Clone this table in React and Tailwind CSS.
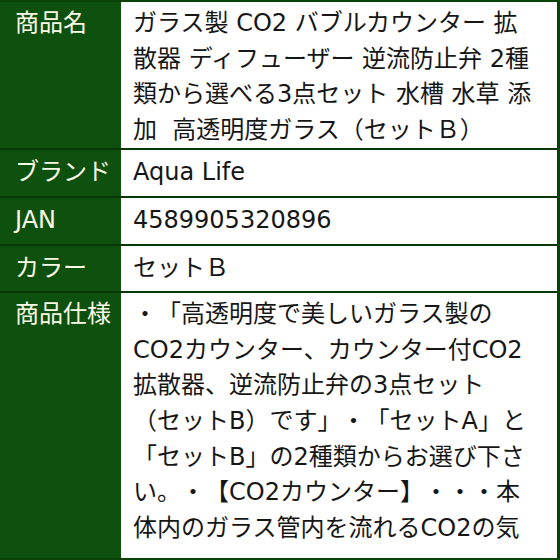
export default function App() {
  const font = { fontFamily: '"DejaVu Sans", "Noto Sans CJK JP", sans-serif' };
  const rows = [
    {
      label: '商品名',
      lines: [
        'ガラス製 CO2 バブルカウンター 拡',
        '散器 ディフューザー 逆流防止弁 2種',
        '類から選べる3点セット 水槽 水草 添',
        '加  高透明度ガラス（セットＢ）',
      ],
      cls: 'pt-[4px]',
    },
    { label: 'ブランド', lines: ['Aqua Life'], cls: 'py-[5px]' },
    { label: 'JAN', lines: ['4589905320896'], cls: 'py-[5px]' },
    { label: 'カラー', lines: ['セットＢ'], cls: 'py-[5px]' },
  ];
  const spec = [
    '・「高透明度で美しいガラス製の',
    'CO2カウンター、カウンター付CO2',
    '拡散器、逆流防止弁の3点セット',
    '（セットB）です」・「セットA」と',
    '「セットB」の2種類からお選び下さ',
    'い。・【CO2カウンター】・・・本',
    '体内のガラス管内を流れるCO2の気',
  ];
  return (
    <div
      className="w-[560px] h-[560px] overflow-hidden bg-[#0e500e] border-t-2 border-r-[3px] border-b-2 border-[#0a420a] flex flex-col text-[24px] leading-[35.6px] whitespace-pre [text-spacing-trim:space-all]"
      style={font}
    >
      {rows.map((r) => (
        <div key={r.label} className="flex border-b-2 border-[#083808]">
          <div className={`w-[121px] shrink-0 pl-[15px] text-[#fbf8e4] ${r.cls}`}>{r.label}</div>
          <div className={`flex-1 bg-white pl-[12px] text-[#161616] ${r.cls}`}>
            {r.lines.map((l, i) => (
              <div key={i}>{l}</div>
            ))}
          </div>
        </div>
      ))}
      <div className="flex flex-1 min-h-0">
        <div className="w-[121px] shrink-0 pl-[15px] pt-[4px] text-[#fbf8e4]">商品仕様</div>
        <div className="flex-1 bg-white pl-[12px] pt-[4px] text-[#161616] overflow-hidden">
          {spec.map((l, i) => (
            <div key={i}>{l}</div>
          ))}
        </div>
      </div>
    </div>
  );
}
